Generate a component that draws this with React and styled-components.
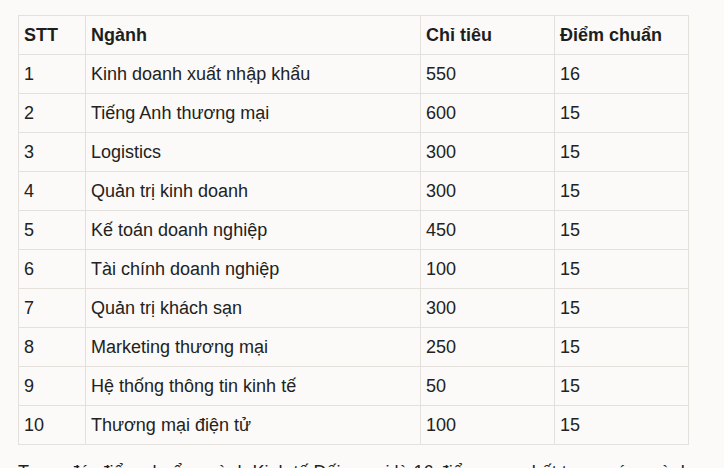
import React from "react";
import styled, { createGlobalStyle } from "styled-components";

const Global = createGlobalStyle`
  html, body { margin: 0; padding: 0; background: #fbfaf8; }
  body { font-family: "Liberation Sans", Arial, sans-serif; color: #222; overflow: hidden; }
`;

const Page = styled.div`
  padding: 15px 18px 0 18px;
  width: 724px;
  height: 468px;
  box-sizing: border-box;
  overflow: hidden;
`;

const Table = styled.table`
  border-collapse: collapse;
  table-layout: fixed;
  width: 670px;
  font-size: 18px;
  line-height: 26px;
`;

const Th = styled.th`
  box-sizing: border-box;
  width: ${(p) => p.$w}px;
  border: 1px solid #e4e1dc;
  padding: 6px 5px;
  text-align: left;
  font-weight: bold;
  color: #1e1e1e;
`;

const Td = styled.td`
  box-sizing: border-box;
  border: 1px solid #e4e1dc;
  padding: 6px 5px;
  text-align: left;
  color: #222;
`;

const Para = styled.p`
  margin: 14px 0 0 0;
  font-size: 18px;
  line-height: 26px;
  color: #222;
  white-space: nowrap;
`;

const rows = [
  ["1", "Kinh doanh xuất nhập khẩu", "550", "16"],
  ["2", "Tiếng Anh thương mại", "600", "15"],
  ["3", "Logistics", "300", "15"],
  ["4", "Quản trị kinh doanh", "300", "15"],
  ["5", "Kế toán doanh nghiệp", "450", "15"],
  ["6", "Tài chính doanh nghiệp", "100", "15"],
  ["7", "Quản trị khách sạn", "300", "15"],
  ["8", "Marketing thương mại", "250", "15"],
  ["9", "Hệ thống thông tin kinh tế", "50", "15"],
  ["10", "Thương mại điện tử", "100", "15"],
];

export default function App() {
  return (
    <Page>
      <Global />
      <Table>
        <thead>
          <tr>
            <Th $w={67}>STT</Th>
            <Th $w={335}>Ngành</Th>
            <Th $w={134}>Chỉ tiêu</Th>
            <Th $w={134}>Điểm chuẩn</Th>
          </tr>
        </thead>
        <tbody>
          {rows.map((r) => (
            <tr key={r[0]}>
              {r.map((c, i) => (
                <Td key={i}>{c}</Td>
              ))}
            </tr>
          ))}
        </tbody>
      </Table>
      <Para>Trong đó, điểm chuẩn ngành Kinh tế Đối ngoại là 16 điểm, cao nhất trong các ngành.</Para>
    </Page>
  );
}
